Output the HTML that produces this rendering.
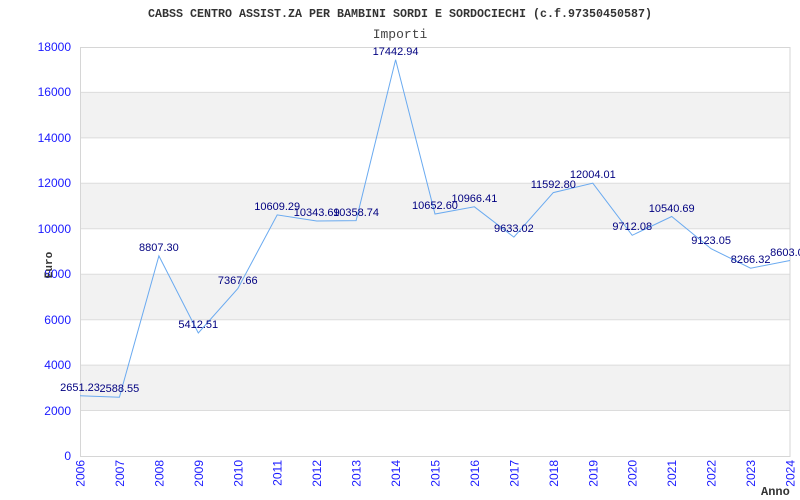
<!DOCTYPE html>
<html><head><meta charset="utf-8"><style>html,body{margin:0;padding:0;background:#fff;width:800px;height:500px;overflow:hidden}</style></head>
<body>
<svg width="800" height="500" xmlns="http://www.w3.org/2000/svg" font-family="Liberation Sans, sans-serif">
<rect width="800" height="500" fill="#fff"/>
<g fill="#f2f2f2">
<rect x="80" y="365.1" width="710" height="45.4"/>
<rect x="80" y="274.2" width="710" height="45.4"/>
<rect x="80" y="183.3" width="710" height="45.5"/>
<rect x="80" y="92.4" width="710" height="45.5"/>
</g>
<g stroke="#dcdcdc" stroke-width="1">
<line x1="80" y1="410.5" x2="790" y2="410.5"/>
<line x1="80" y1="365.1" x2="790" y2="365.1"/>
<line x1="80" y1="319.7" x2="790" y2="319.7"/>
<line x1="80" y1="274.2" x2="790" y2="274.2"/>
<line x1="80" y1="228.8" x2="790" y2="228.8"/>
<line x1="80" y1="183.3" x2="790" y2="183.3"/>
<line x1="80" y1="137.9" x2="790" y2="137.9"/>
<line x1="80" y1="92.4" x2="790" y2="92.4"/>
</g>
<rect x="80.5" y="47.5" width="709.5" height="409" fill="none" stroke="#d6d6d6"/>
<polyline fill="none" stroke="#6aaaf0" stroke-width="1" points="80,395.8 119.4,397.2 158.9,255.9 198.3,333 237.8,288.6 277.2,214.9 316.7,221 356.1,220.6 395.6,59.7 435,214 474.4,206.8 513.9,237.1 553.3,192.6 592.8,183.2 632.2,235.3 671.7,216.5 711.1,248.7 750.6,268.2 790,260.5"/>
<g font-size="11" fill="#000080" text-anchor="middle">
<text x="80" y="391">2651.23</text>
<text x="119.4" y="392">2588.55</text>
<text x="158.9" y="251">8807.30</text>
<text x="198.3" y="328">5412.51</text>
<text x="237.8" y="284">7367.66</text>
<text x="277.2" y="210">10609.29</text>
<text x="316.7" y="216">10343.69</text>
<text x="356.1" y="216">10358.74</text>
<text x="395.6" y="55">17442.94</text>
<text x="435" y="209">10652.60</text>
<text x="474.4" y="202">10966.41</text>
<text x="513.9" y="232">9633.02</text>
<text x="553.3" y="188">11592.80</text>
<text x="592.8" y="178">12004.01</text>
<text x="632.2" y="230">9712.08</text>
<text x="671.7" y="212">10540.69</text>
<text x="711.1" y="244">9123.05</text>
<text x="750.6" y="263">8266.32</text>
<text x="790" y="256">8603.00</text>
</g>
<g font-size="12" fill="#1a1aff" text-anchor="end">
<text x="71" y="460">0</text>
<text x="71" y="415">2000</text>
<text x="71" y="369">4000</text>
<text x="71" y="324">6000</text>
<text x="71" y="278">8000</text>
<text x="71" y="233">10000</text>
<text x="71" y="187">12000</text>
<text x="71" y="142">14000</text>
<text x="71" y="96">16000</text>
<text x="71" y="51">18000</text>
</g>
<g font-size="12" fill="#1a1aff" text-anchor="end">
<text transform="translate(84.5,460) rotate(-90)">2006</text>
<text transform="translate(123.9,460) rotate(-90)">2007</text>
<text transform="translate(163.4,460) rotate(-90)">2008</text>
<text transform="translate(202.8,460) rotate(-90)">2009</text>
<text transform="translate(242.3,460) rotate(-90)">2010</text>
<text transform="translate(281.7,460) rotate(-90)">2011</text>
<text transform="translate(321.2,460) rotate(-90)">2012</text>
<text transform="translate(360.6,460) rotate(-90)">2013</text>
<text transform="translate(400.1,460) rotate(-90)">2014</text>
<text transform="translate(439.5,460) rotate(-90)">2015</text>
<text transform="translate(478.9,460) rotate(-90)">2016</text>
<text transform="translate(518.4,460) rotate(-90)">2017</text>
<text transform="translate(557.8,460) rotate(-90)">2018</text>
<text transform="translate(597.3,460) rotate(-90)">2019</text>
<text transform="translate(636.7,460) rotate(-90)">2020</text>
<text transform="translate(676.2,460) rotate(-90)">2021</text>
<text transform="translate(715.6,460) rotate(-90)">2022</text>
<text transform="translate(755.1,460) rotate(-90)">2023</text>
<text transform="translate(794.5,460) rotate(-90)">2024</text>
</g>
<text x="148" y="17" font-family="Liberation Mono, monospace" font-weight="bold" font-size="11.5" fill="#333" textLength="504" lengthAdjust="spacingAndGlyphs">CABSS CENTRO ASSIST.ZA PER BAMBINI SORDI E SORDOCIECHI (c.f.97350450587)</text>
<text x="400" y="38" font-family="Liberation Mono, monospace" font-size="13" fill="#444" text-anchor="middle">Importi</text>
<text transform="translate(52,265) rotate(-90)" font-family="Liberation Mono, monospace" font-weight="bold" font-size="11" fill="#333" text-anchor="middle">Euro</text>
<text x="761" y="495" font-family="Liberation Mono, monospace" font-weight="bold" font-size="12" fill="#333">Anno</text>
</svg>
</body></html>
